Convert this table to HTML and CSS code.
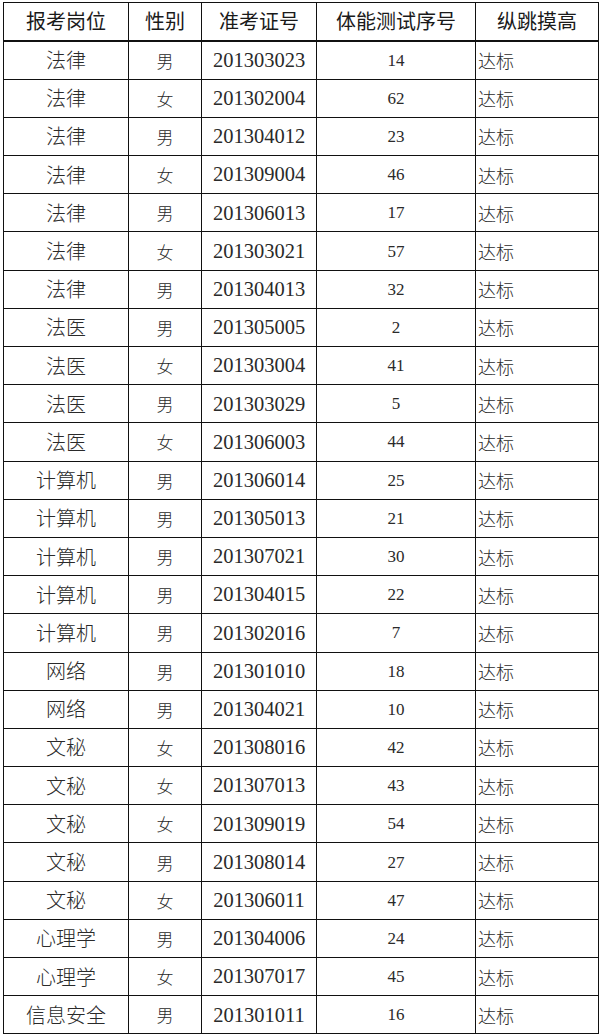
FILE: index.html
```html
<!DOCTYPE html>
<html lang="zh">
<head>
<meta charset="utf-8">
<link rel="stylesheet" href="styles.css">
</head>
<body>
<table class="sheet">
<colgroup>
<col class="c1"><col class="c2"><col class="c3"><col class="c4"><col class="c5">
</colgroup>
<thead>
<tr class="head"><th>报考岗位</th><th>性别</th><th>准考证号</th><th>体能测试序号</th><th>纵跳摸高</th></tr>
</thead>
<tbody>
<tr><td class="post">法律</td><td class="sex">男</td><td class="id">201303023</td><td class="num">14</td><td class="res">达标</td></tr>
<tr><td class="post">法律</td><td class="sex">女</td><td class="id">201302004</td><td class="num">62</td><td class="res">达标</td></tr>
<tr><td class="post">法律</td><td class="sex">男</td><td class="id">201304012</td><td class="num">23</td><td class="res">达标</td></tr>
<tr><td class="post">法律</td><td class="sex">女</td><td class="id">201309004</td><td class="num">46</td><td class="res">达标</td></tr>
<tr><td class="post">法律</td><td class="sex">男</td><td class="id">201306013</td><td class="num">17</td><td class="res">达标</td></tr>
<tr><td class="post">法律</td><td class="sex">女</td><td class="id">201303021</td><td class="num">57</td><td class="res">达标</td></tr>
<tr><td class="post">法律</td><td class="sex">男</td><td class="id">201304013</td><td class="num">32</td><td class="res">达标</td></tr>
<tr><td class="post">法医</td><td class="sex">男</td><td class="id">201305005</td><td class="num">2</td><td class="res">达标</td></tr>
<tr><td class="post">法医</td><td class="sex">女</td><td class="id">201303004</td><td class="num">41</td><td class="res">达标</td></tr>
<tr><td class="post">法医</td><td class="sex">男</td><td class="id">201303029</td><td class="num">5</td><td class="res">达标</td></tr>
<tr><td class="post">法医</td><td class="sex">女</td><td class="id">201306003</td><td class="num">44</td><td class="res">达标</td></tr>
<tr><td class="post">计算机</td><td class="sex">男</td><td class="id">201306014</td><td class="num">25</td><td class="res">达标</td></tr>
<tr><td class="post">计算机</td><td class="sex">男</td><td class="id">201305013</td><td class="num">21</td><td class="res">达标</td></tr>
<tr><td class="post">计算机</td><td class="sex">男</td><td class="id">201307021</td><td class="num">30</td><td class="res">达标</td></tr>
<tr><td class="post">计算机</td><td class="sex">男</td><td class="id">201304015</td><td class="num">22</td><td class="res">达标</td></tr>
<tr><td class="post">计算机</td><td class="sex">男</td><td class="id">201302016</td><td class="num">7</td><td class="res">达标</td></tr>
<tr><td class="post">网络</td><td class="sex">男</td><td class="id">201301010</td><td class="num">18</td><td class="res">达标</td></tr>
<tr><td class="post">网络</td><td class="sex">男</td><td class="id">201304021</td><td class="num">10</td><td class="res">达标</td></tr>
<tr><td class="post">文秘</td><td class="sex">女</td><td class="id">201308016</td><td class="num">42</td><td class="res">达标</td></tr>
<tr><td class="post">文秘</td><td class="sex">女</td><td class="id">201307013</td><td class="num">43</td><td class="res">达标</td></tr>
<tr><td class="post">文秘</td><td class="sex">女</td><td class="id">201309019</td><td class="num">54</td><td class="res">达标</td></tr>
<tr><td class="post">文秘</td><td class="sex">男</td><td class="id">201308014</td><td class="num">27</td><td class="res">达标</td></tr>
<tr><td class="post">文秘</td><td class="sex">女</td><td class="id">201306011</td><td class="num">47</td><td class="res">达标</td></tr>
<tr><td class="post">心理学</td><td class="sex">男</td><td class="id">201304006</td><td class="num">24</td><td class="res">达标</td></tr>
<tr><td class="post">心理学</td><td class="sex">女</td><td class="id">201307017</td><td class="num">45</td><td class="res">达标</td></tr>
<tr><td class="post">信息安全</td><td class="sex">男</td><td class="id">201301011</td><td class="num">16</td><td class="res">达标</td></tr>
</tbody>
</table>
</body>
</html>
```

FILE: styles.css
```css
html, body {
  margin: 0;
  padding: 0;
  background: #ffffff;
}
body {
  padding: 2px 0 0 3px;
  font-family: "Liberation Serif", "Noto Sans CJK SC", serif;
  color: #2a2a2a;
}
.sheet {
  border-collapse: collapse;
  table-layout: fixed;
  width: 595px;
}
.c1 { width: 125px; }
.c2 { width: 73px; }
.c3 { width: 115px; }
.c4 { width: 159px; }
.c5 { width: 123px; }
.sheet th, .sheet td {
  border: 1px solid #111111;
  padding: 0;
  height: 37.2px;
  text-align: center;
  vertical-align: middle;
  white-space: nowrap;
  overflow: hidden;
  line-height: 1;
}
.head th {
  height: 36.5px;
  font-family: "Noto Sans CJK SC", sans-serif;
  font-weight: normal;
  font-size: 20px;
  color: #1a1a1a;
  border-bottom-width: 2px;
}
.post {
  font-family: "Noto Sans CJK SC", sans-serif;
  font-size: 20px;
  font-weight: 300;
}
.sex {
  font-family: "Noto Sans CJK SC", sans-serif;
  font-size: 17px;
  font-weight: 300;
}
.id {
  font-size: 20.5px;
}
.num {
  font-size: 17px;
}
.sheet td.res {
  text-align: left;
  padding-left: 2px;
  font-family: "Noto Sans CJK SC", sans-serif;
  font-size: 18px;
  font-weight: 300;
}
```
